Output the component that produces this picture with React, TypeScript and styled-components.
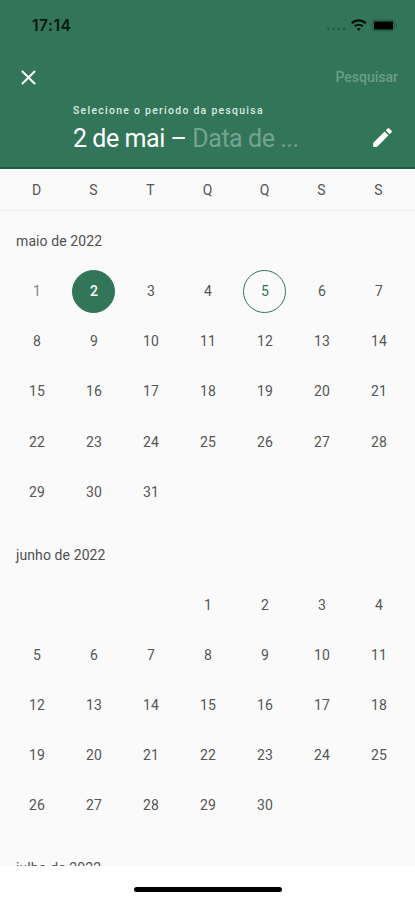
import React from "react";
import styled, { createGlobalStyle } from "styled-components";

const GREEN = "#327558";

const GlobalStyle = createGlobalStyle`
  * { box-sizing: border-box; }
  body { margin: 0; background: #fff; font-family: Roboto, sans-serif; }
`;

const Screen = styled.div`
  width: 415px;
  height: 900px;
  display: flex;
  flex-direction: column;
  overflow: hidden;
  background: #fff;
`;

const Header = styled.header`
  height: 169px;
  flex: none;
  display: flex;
  flex-direction: column;
  background: ${GREEN};
  border-bottom: 2px solid #17603f;
  color: #fff;
`;

const StatusBar = styled.div`
  height: 50px;
  padding: 0 16px 0 32px;
  display: flex;
  align-items: center;
  justify-content: space-between;
`;

const Clock = styled.span`
  padding-top: 1px;
  font: 600 15.5px/20px Inter, sans-serif;
  letter-spacing: 0.5px;
  color: #07180f;
`;

const StatusIcons = styled.svg`
  display: block;
  width: 74px;
  height: 18px;
`;

const ActionBar = styled.div`
  height: 54px;
  padding: 0 17px 0 16px;
  display: flex;
  align-items: center;
  justify-content: space-between;
`;

const IconButton = styled.button`
  padding: 0;
  border: 0;
  background: none;
  color: #fff;
  display: flex;
`;

const Icon = styled.svg`
  width: 25px;
  height: 25px;
  fill: currentColor;
`;

const SearchButton = styled.button`
  padding: 0;
  border: 0;
  background: none;
  font: 500 14px/20px Roboto, sans-serif;
  letter-spacing: 0;
  color: #6b9e87;
`;

const RangeBar = styled.div`
  display: flex;
  justify-content: space-between;
  align-items: flex-end;
  padding: 0 20px 0 73px;
  height: 50px;
`;

const RangeText = styled.div`
  display: flex;
  flex-direction: column;
`;

const Caption = styled.span`
  font-size: 10.4px;
  line-height: 14px;
  font-weight: 500;
  letter-spacing: 1.3px;
  white-space: nowrap;
  color: #dcebe3;
`;

const Range = styled.span`
  margin-top: 6px;
  font-size: 25px;
  line-height: 30px;
  letter-spacing: -0.45px;
  white-space: pre;
`;

const Placeholder = styled.span`
  color: #74a48f;
`;

const EditSlot = styled.div`
  padding-bottom: 4px;
`;

const WeekRow = styled.div`
  flex: none;
  display: grid;
  grid-template-columns: repeat(7, 57px);
  justify-content: center;
  align-items: center;
  height: 42px;
  background: #fafafa;
  border-bottom: 1px solid #efefef;
  font-size: 14px;
  line-height: 18px;
  color: #555;
  text-align: center;
`;

const Months = styled.main`
  flex: none;
  height: 655px;
  overflow: hidden;
  background: #fafafa;
`;

const Month = styled.section`
  height: 313.6px;
`;

const MonthName = styled.h2`
  margin: 0;
  padding: 0 16px;
  height: 55px;
  font-size: 14px;
  line-height: 60px;
  font-weight: 400;
  letter-spacing: 0.1px;
  color: #505050;
`;

const Days = styled.div`
  display: grid;
  grid-template-columns: repeat(7, 57px);
  grid-auto-rows: 50.2px;
  justify-content: center;
  place-items: center;
`;

const Day = styled.div<{ $start?: number; $kind?: "selected" | "today" | "past" }>`
  ${(p) => p.$start && `grid-column-start: ${p.$start};`}
  width: 43px;
  height: 43px;
  padding-left: 1px;
  border-radius: 50%;
  display: flex;
  align-items: center;
  justify-content: center;
  font-size: 14px;
  letter-spacing: 0.2px;
  border: 1px solid ${(p) => (p.$kind === "today" || p.$kind === "selected" ? GREEN : "transparent")};
  background: ${(p) => (p.$kind === "selected" ? GREEN : "transparent")};
  color: ${(p) => (p.$kind === "selected" ? "#fff" : p.$kind === "today" ? GREEN : p.$kind === "past" ? "#858585" : "#555")};
  font-weight: ${(p) => (p.$kind === "selected" ? 500 : 400)};
`;

const HomeArea = styled.footer`
  flex: 1;
  display: flex;
  justify-content: center;
  padding: 21px 0 0 1px;
`;

const HomeIndicator = styled.div`
  width: 148px;
  height: 5px;
  border-radius: 3px;
  background: #000;
`;

const months = [
  { name: "maio de 2022", start: 1, count: 31, selected: 2, today: 5 },
  { name: "junho de 2022", start: 4, count: 30 },
  { name: "julho de 2022", start: 6, count: 0 },
];

export default function App() {
  return (
    <>
      <GlobalStyle />
      <Screen>
        <Header>
          <StatusBar>
            <Clock>17:14</Clock>
            <StatusIcons viewBox="0 0 74 18">
              <g fill="#245d45">
                <circle cx="3.5" cy="13" r="1.4" />
                <circle cx="8.6" cy="13" r="1.4" />
                <circle cx="13.8" cy="13" r="1.4" />
                <circle cx="18.9" cy="13" r="1.4" />
              </g>
              <g fill="none" stroke="#03100a" strokeWidth="2.2">
                <path d="M26.8 7.2a10 10 0 0 1 14 0" />
                <path d="M29.8 10.3a6 6 0 0 1 8 0" />
              </g>
              <path d="M33.8 14.9l-2-2.2a3.2 3.2 0 0 1 4 0z" fill="#03100a" />
              <rect x="47.2" y="3.9" width="22.5" height="11" rx="3" fill="#2a6a4f" stroke="#25634a" />
              <rect x="49" y="5.4" width="19" height="8" rx="1" fill="#000" />
              <path d="M71 7.4q2 2 0 4z" fill="#205640" />
            </StatusIcons>
          </StatusBar>
          <ActionBar>
            <IconButton aria-label="Fechar">
              <Icon viewBox="0 0 24 24">
                <path d="M19 6.41 17.59 5 12 10.59 6.41 5 5 6.41 10.59 12 5 17.59 6.41 19 12 13.41 17.59 19 19 17.59 13.41 12z" />
              </Icon>
            </IconButton>
            <SearchButton>Pesquisar</SearchButton>
          </ActionBar>
          <RangeBar>
            <RangeText>
              <Caption>Selecione o período da pesquisa</Caption>
              <Range>
                2 de mai – <Placeholder>Data de ...</Placeholder>
              </Range>
            </RangeText>
            <EditSlot>
              <IconButton aria-label="Editar">
                <Icon viewBox="0 0 24 24">
                  <path d="M3 17.46v3.04c0 .28.22.5.5.5h3.04c.13 0 .26-.05.35-.15L17.81 9.94l-3.75-3.75L3.15 17.1c-.1.1-.15.22-.15.36zM20.71 7.04a1 1 0 0 0 0-1.41l-2.34-2.34a1 1 0 0 0-1.41 0l-1.83 1.83 3.75 3.75 1.83-1.83z" />
                </Icon>
              </IconButton>
            </EditSlot>
          </RangeBar>
        </Header>
        <WeekRow>
          {["D", "S", "T", "Q", "Q", "S", "S"].map((d, i) => (
            <span key={i}>{d}</span>
          ))}
        </WeekRow>
        <Months>
          {months.map((m) => (
            <Month key={m.name}>
              <MonthName>{m.name}</MonthName>
              <Days>
                {Array.from({ length: m.count }, (_, i) => i + 1).map((n) => (
                  <Day
                    key={n}
                    $start={n === 1 ? m.start : undefined}
                    $kind={
                      n === m.selected ? "selected" : n === m.today ? "today" : m.selected && n < m.selected ? "past" : undefined
                    }
                  >
                    {n}
                  </Day>
                ))}
              </Days>
            </Month>
          ))}
        </Months>
        <HomeArea>
          <HomeIndicator />
        </HomeArea>
      </Screen>
    </>
  );
}
